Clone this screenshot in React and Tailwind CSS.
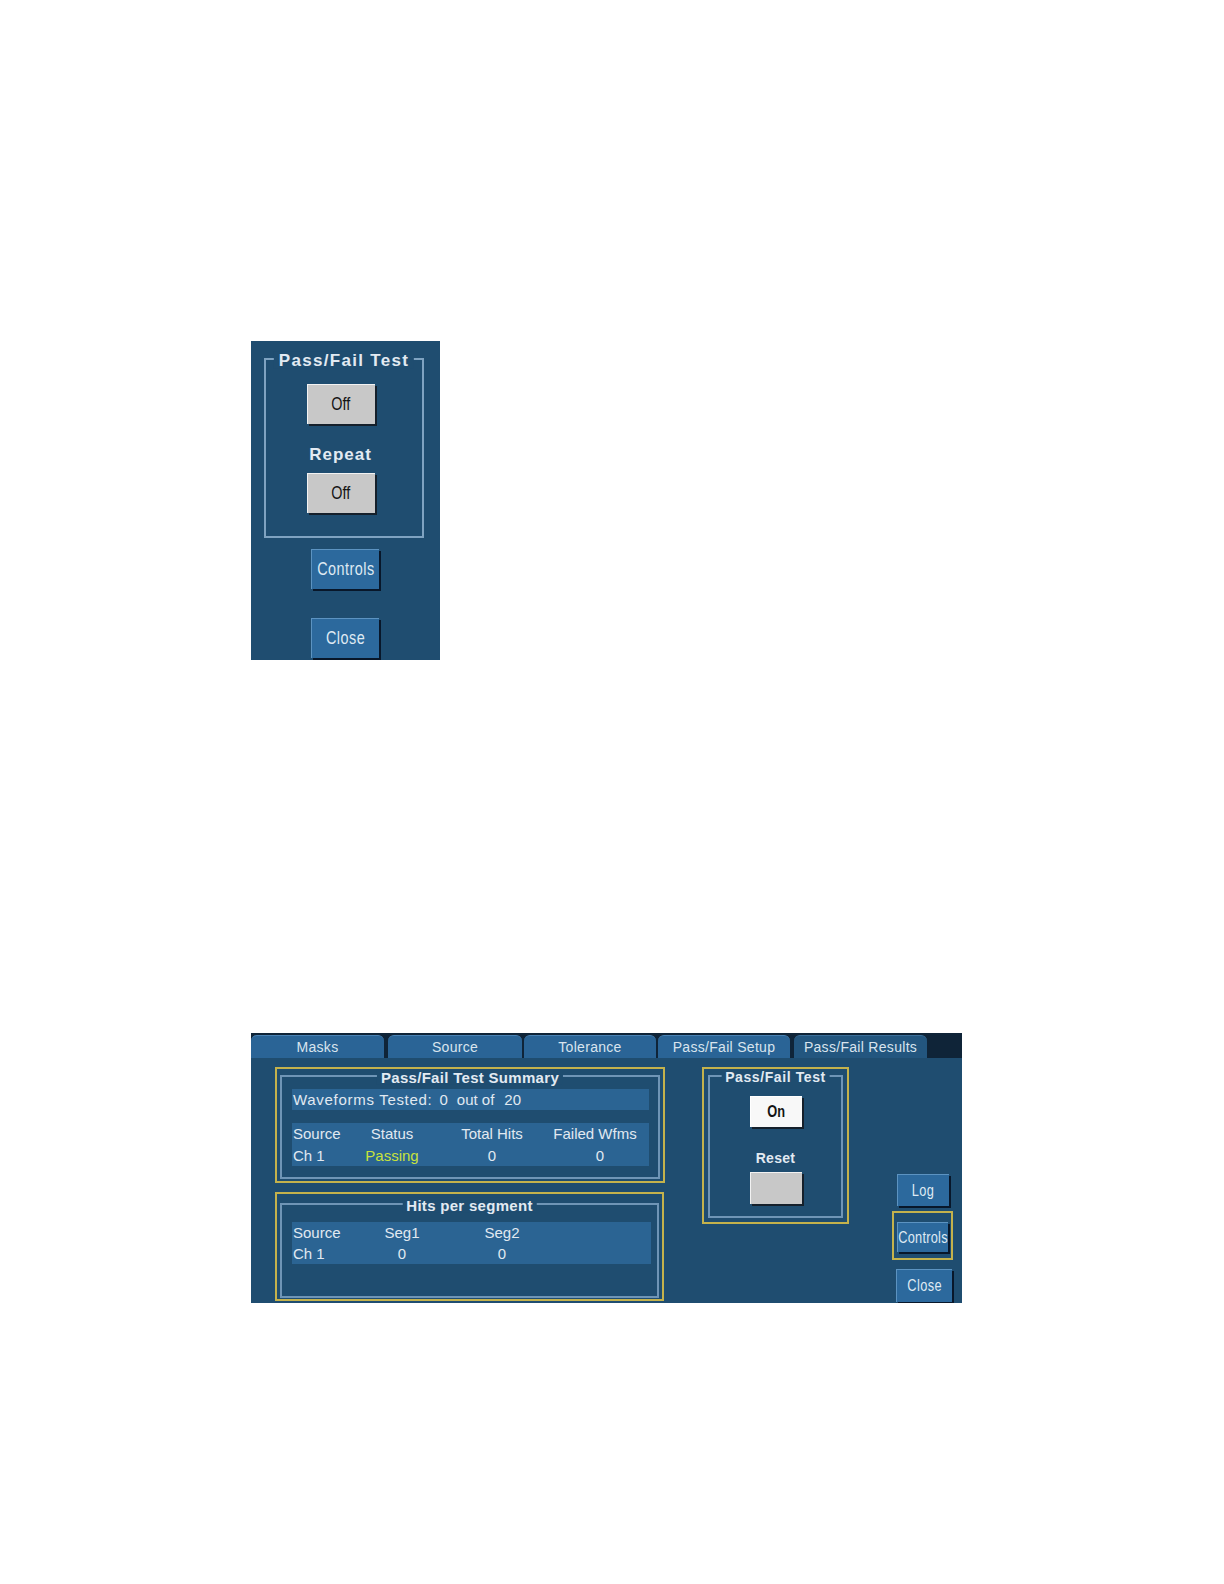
import React from 'react';

const sans = { fontFamily: '"Liberation Sans", Arial, Helvetica, sans-serif' };

const blueBtn =
  'flex items-center justify-center bg-[#2c699d] border-t border-l border-[#5c93c1] shadow-[2px_2px_0_#08172a] text-[#dfe9f3] whitespace-nowrap';
const grayBtn =
  'flex items-center justify-center bg-[#c8c8c8] border-t border-l border-[#f2f2f2] shadow-[2px_2px_0_#15202b] text-[#141414] whitespace-nowrap';
const whiteBtn =
  'flex items-center justify-center bg-[#f8f8f8] border-t border-l border-[#ffffff] shadow-[2px_2px_0_#15202b] text-[#141414] whitespace-nowrap';

const tabs = [
  { label: 'Masks', w: 'w-[133px]', ml: 'ml-0' },
  { label: 'Source', w: 'w-[134px]', ml: 'ml-[4px]' },
  { label: 'Tolerance', w: 'w-[132px]', ml: 'ml-[2px]' },
  { label: 'Pass/Fail Setup', w: 'w-[132px]', ml: 'ml-[2px]' },
];

const summaryHead = ['Source', 'Status', 'Total Hits', 'Failed Wfms'];
const segHead = ['Source', 'Seg1', 'Seg2'];

// scope labels use a narrow face; squeeze Arial metrics horizontally
function Narrow({ children, className = '' }) {
  return <span className={'inline-block scale-x-[0.8] ' + className}>{children}</span>;
}

function GroupTitle({ children, className }) {
  return (
    <span
      className={
        'absolute top-0 left-1/2 -translate-x-1/2 -translate-y-1/2 bg-[#1f4d70] px-[4px] font-bold leading-none whitespace-nowrap text-[#e2eaf2] ' +
        className
      }
    >
      {children}
    </span>
  );
}

function SidePanel() {
  return (
    <div className="w-[189px] h-[319px] bg-[#1f4d70] pt-[17px] pl-[13px] pr-[16px] flex flex-col items-center">
      <div className="relative self-stretch h-[180px] border-2 border-[#7fa3c1] flex flex-col items-center pt-[24px] pr-[7px]">
        <GroupTitle className="text-[17px] tracking-[1.3px] px-[5px]">Pass/Fail Test</GroupTitle>
        <div className={grayBtn + ' w-[68px] h-[40px] text-[18px]'}>
          <Narrow>Off</Narrow>
        </div>
        <div className="mt-[21px] text-[17px] leading-[20px] font-bold tracking-[1px] text-[#e2eaf2]">Repeat</div>
        <div className={grayBtn + ' mt-[8px] w-[68px] h-[40px] text-[18px]'}>
          <Narrow>Off</Narrow>
        </div>
      </div>
      <div className={blueBtn + ' mt-[11px] ml-[2px] w-[68px] h-[40px] text-[18px]'}>
        <Narrow className="tracking-[0.6px]">Controls</Narrow>
      </div>
      <div className={blueBtn + ' mt-[29px] ml-[2px] w-[68px] h-[40px] text-[18px]'}>
        <Narrow className="tracking-[0.6px]">Close</Narrow>
      </div>
    </div>
  );
}

function ResultsPanel() {
  return (
    <div className="mt-[373px] w-[711px] h-[270px] bg-[#1f4d70] overflow-hidden flex flex-col text-[#e1e9f1]">
      <div className="h-[25px] shrink-0 bg-[#0f2438] flex items-end">
        {tabs.map((t) => (
          <div
            key={t.label}
            className={
              t.w +
              ' ' +
              t.ml +
              ' h-[23px] rounded-t-[6px] bg-[#2a6496] border-t border-[#4a82b3] flex items-center justify-center text-[14px] tracking-[0.3px] text-[#d9e4ee]'
            }
          >
            {t.label}
          </div>
        ))}
        <div className="w-[133px] ml-[4px] h-[23px] rounded-t-[6px] bg-[#23567f] border-t border-[#3c6f99] flex items-center justify-center text-[14px] tracking-[0.3px] text-[#d9e4ee]">
          Pass/Fail Results
        </div>
      </div>

      <div className="flex pl-[24px] pt-[9px] text-[15px]">
        <div className="w-[390px] flex flex-col">
          {/* summary */}
          <div className="h-[116px] border-2 border-[#c4b24c] flex flex-col">
            <div className="relative flex-1 mt-[6px] mx-[3px] mb-[2px] border-2 border-[#6f95b6] pt-[12px] pl-[10px]">
              <GroupTitle className="text-[15px] tracking-[0.3px]">Pass/Fail Test Summary</GroupTitle>
              <div className="w-[357px] h-[21px] bg-[#2b6493] flex items-center leading-none whitespace-nowrap">
                <span className="ml-[1px] tracking-[0.7px]">Waveforms Tested:</span>
                <span className="ml-[7px]">0</span>
                <span className="ml-[9px]">out of</span>
                <span className="ml-[10px]">20</span>
              </div>
              <div className="mt-[13px] w-[357px] h-[43px] bg-[#2b6493] grid grid-cols-[58px_84px_116px_90px] leading-[21px]">
                {summaryHead.map((h, i) => (
                  <div key={h} className={i === 0 ? 'pl-[1px] whitespace-nowrap' : 'text-center whitespace-nowrap'}>
                    {h}
                  </div>
                ))}
                <div className="pl-[1px]">Ch 1</div>
                <div className="text-center text-[#c8e23c]">Passing</div>
                <div className="text-center">0</div>
                <div className="text-center pl-[10px]">0</div>
              </div>
            </div>
          </div>

          {/* hits per segment */}
          <div className="mt-[9px] w-[389px] h-[109px] border-2 border-[#c4b24c] flex flex-col">
            <div className="relative flex-1 mt-[9px] mx-[3px] mb-[1px] border-2 border-[#6f95b6] pt-[17px] pl-[10px]">
              <GroupTitle className="text-[15px] tracking-[0.3px]">Hits per segment</GroupTitle>
              <div className="w-[359px] h-[42px] bg-[#2b6493] grid grid-cols-[60px_100px_100px] leading-[21px]">
                {segHead.map((h, i) => (
                  <div key={h} className={i === 0 ? 'pl-[1px]' : 'text-center'}>
                    {h}
                  </div>
                ))}
                <div className="pl-[1px]">Ch 1</div>
                <div className="text-center">0</div>
                <div className="text-center">0</div>
              </div>
            </div>
          </div>
        </div>

        {/* pass/fail test control */}
        <div className="ml-[37px] w-[147px] h-[157px] border-2 border-[#c4b24c] flex flex-col">
          <div className="relative flex-1 mt-[6px] mx-[4px] mb-[4px] border-2 border-[#6f95b6] flex flex-col items-center pt-[19px]">
            <GroupTitle className="text-[14px] tracking-[0.6px]">Pass/Fail Test</GroupTitle>
            <div className={whiteBtn + ' w-[52px] h-[31px] text-[16px] font-bold'}>
              <Narrow>On</Narrow>
            </div>
            <div className="mt-[22px] text-[14px] leading-[18px] font-bold tracking-[0.3px] text-[#e2eaf2]">Reset</div>
            <div className={grayBtn + ' mt-[5px] w-[52px] h-[32px]'}></div>
          </div>
        </div>

        {/* right buttons */}
        <div className="ml-[43px] w-[61px] mt-[107px] flex flex-col">
          <div className={blueBtn + ' ml-[5px] w-[52px] h-[32px] text-[16px]'}>
            <Narrow className="tracking-[0.5px]">Log</Narrow>
          </div>
          <div className="mt-[5px] w-[61px] h-[49px] border-2 border-[#c4b24c] pt-[9px] pl-[3px]">
            <div className={blueBtn + ' w-[51px] h-[30px] text-[16px]'}>
              <Narrow className="tracking-[0.3px]">Controls</Narrow>
            </div>
          </div>
          <div className={blueBtn + ' mt-[9px] ml-[4px] w-[56px] h-[33px] text-[16px]'}>
            <Narrow className="tracking-[0.5px]">Close</Narrow>
          </div>
        </div>
      </div>
    </div>
  );
}

export default function App() {
  return (
    <div className="w-[1224px] min-h-[1584px] bg-white pt-[341px] pl-[251px]" style={sans}>
      <SidePanel />
      <ResultsPanel />
    </div>
  );
}
